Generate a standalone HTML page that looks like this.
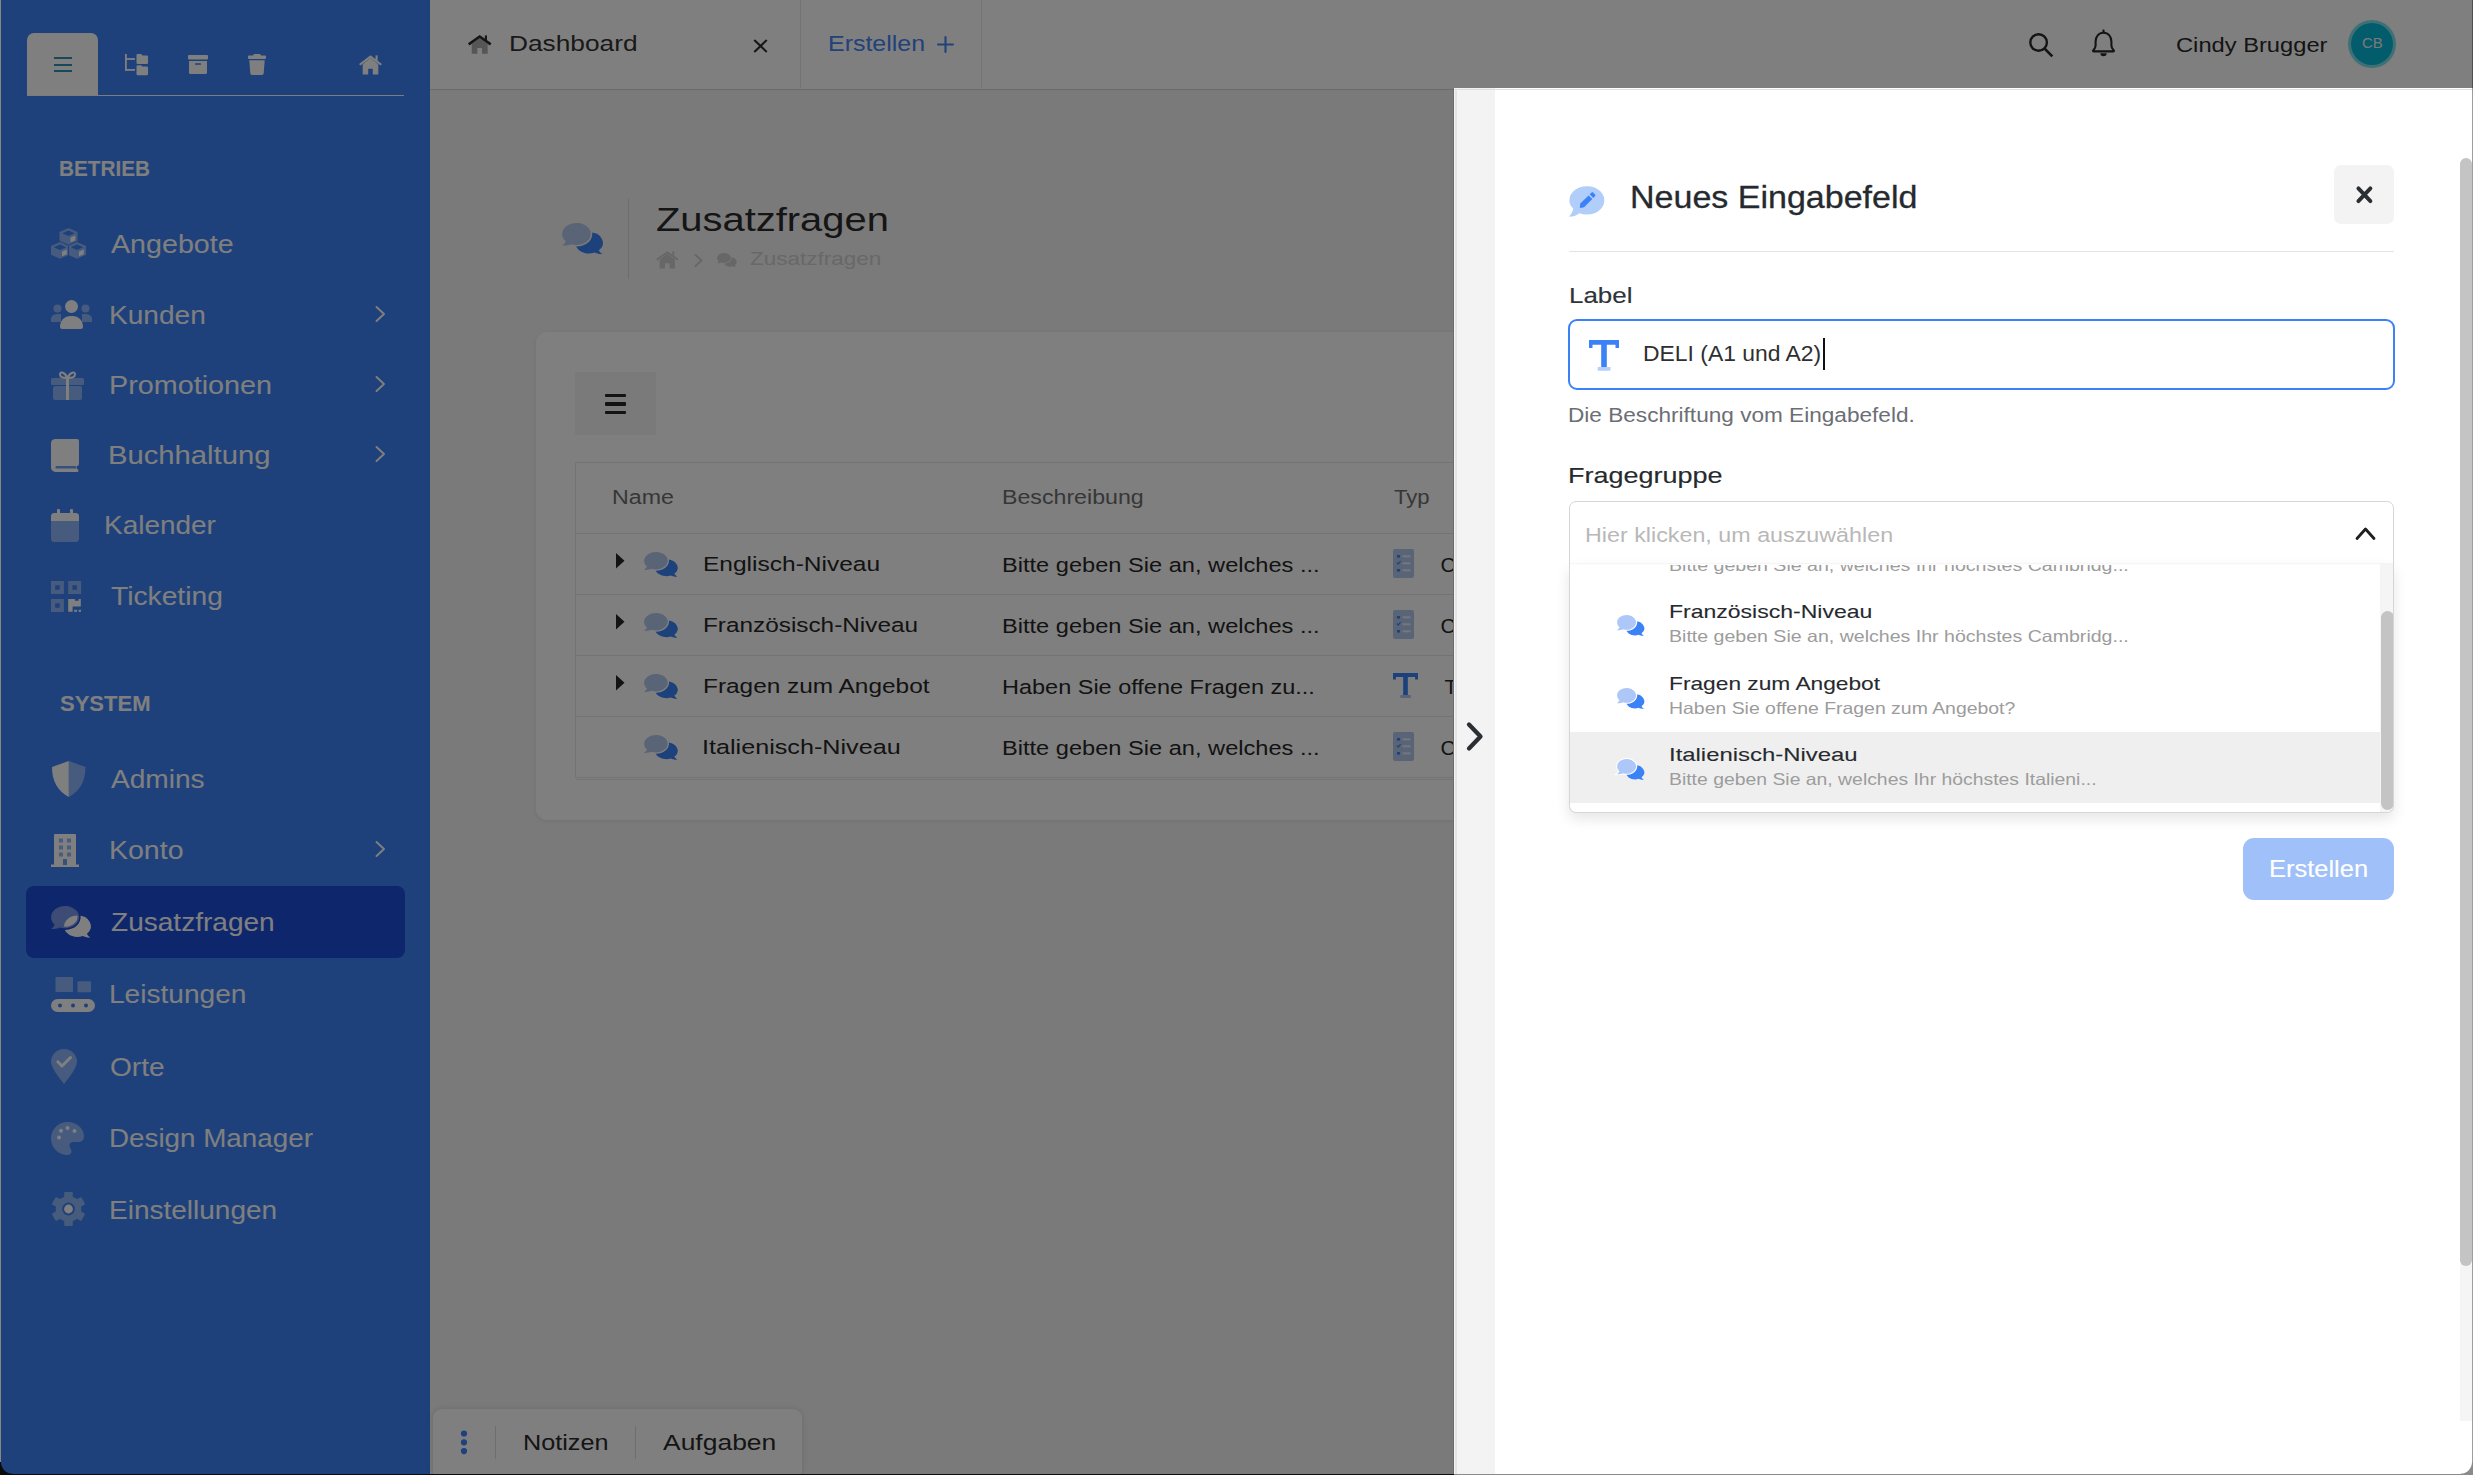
<!DOCTYPE html>
<html><head><meta charset="utf-8"><title>Zusatzfragen</title>
<style>
html,body{margin:0;padding:0;width:2473px;height:1475px;overflow:hidden;background:#7a7a7a}
body{position:relative;font-family:"Liberation Sans", sans-serif}
.t{position:absolute;white-space:nowrap}
.r{position:absolute}
</style></head><body>
<div class="r" style="left:0px;top:0px;width:2473px;height:1475px;background:#f4f4f4;"></div>
<div class="r" style="left:430px;top:0px;width:2043px;height:89px;background:#ffffff;"></div>
<div class="r" style="left:430px;top:89px;width:2043px;height:1px;background:#d6d6d6;"></div>
<div class="r" style="left:0px;top:0px;width:430px;height:1475px;background:#3c83f6;"></div>
<div class="r" style="left:27px;top:33px;width:71px;height:62px;background:#fff;border-radius:7px 7px 0 0"></div>
<div class="r" style="left:27px;top:95px;width:377px;height:1px;background:rgba(255,255,255,0.95);"></div>
<div class="r" style="left:54px;top:57px;width:18px;height:2px;background:#2d93b3;"></div>
<div class="r" style="left:54px;top:63.5px;width:18px;height:2.0px;background:#2d93b3;"></div>
<div class="r" style="left:54px;top:70px;width:18px;height:2px;background:#2d93b3;"></div>
<svg class="r" style="left:125px;top:54px;width:23px;height:21px;overflow:visible;" viewBox="0 0 23 21"><g fill="#ffffff"><rect x="0" y="0" width="1.8" height="16.8"/><rect x="0" y="4.1" width="10" height="1.8"/><rect x="0" y="15" width="10" height="1.8"/><path d="M11.5 1.2 a1.2 1.2 0 0 1 1.2-1.2 h3.3 l1.6 1.4 h4.2 a1.2 1.2 0 0 1 1.2 1.2 v6.2 a1.2 1.2 0 0 1-1.2 1.2 h-9.1 a1.2 1.2 0 0 1-1.2-1.2z"/><path d="M11.5 12.4 a1.2 1.2 0 0 1 1.2-1.2 h3.3 l1.6 1.4 h4.2 a1.2 1.2 0 0 1 1.2 1.2 v6.2 a1.2 1.2 0 0 1-1.2 1.2 h-9.1 a1.2 1.2 0 0 1-1.2-1.2z"/></g></svg>
<svg class="r" style="left:188px;top:55px;width:20px;height:19px;overflow:visible;" viewBox="0 0 20 19"><g fill="#ffffff"><rect x="0" y="0" width="20" height="4.6" rx="1"/><path d="M1 6 h18 v11.5 a1.5 1.5 0 0 1-1.5 1.5 h-15 a1.5 1.5 0 0 1-1.5-1.5z"/></g><rect x="7" y="8.2" width="6" height="1.6" rx="0.6" fill="#3c83f6"/></svg>
<svg class="r" style="left:248px;top:54px;width:18px;height:21px;overflow:visible;" viewBox="0 0 18 21"><g fill="#ffffff"><path d="M5 1.5 l1-1.5 h6 l1 1.5 h4 a1 1 0 0 1 1 1 v1.6 a1 1 0 0 1-1 1 h-16 a1 1 0 0 1-1-1 v-1.6 a1 1 0 0 1 1-1z"/><path d="M1.3 6.3 h15.4 l-1 13 a1.8 1.8 0 0 1-1.8 1.7 h-9.8 a1.8 1.8 0 0 1-1.8-1.7z"/></g></svg>
<svg class="r" style="left:359px;top:54.5px;width:23px;height:19.5px;overflow:visible;" viewBox="0 0 23 19.5"><path d="M3.68 9.36 L11.50 3.12 L19.32 9.36 V19.50 H13.80 V13.65 H9.20 V19.50 H3.68z" fill="#ffffff"/><path d="M0.69 9.75 L11.50 1.56 L22.31 9.75" fill="none" stroke="#ffffff" stroke-width="2.15" stroke-linejoin="miter"/><rect x="16.56" y="0.39" width="2.07" height="5.85" fill="#ffffff"/></svg>
<div class="t" style="left:59.08px;top:157.75px;font-size:22.5px;line-height:22.5px;color:#ffffff;font-weight:700;transform:scaleX(0.9210);transform-origin:0 0;">BETRIEB</div>
<div class="t" style="left:59.70px;top:693.05px;font-size:22.5px;line-height:22.5px;color:#ffffff;font-weight:700;transform:scaleX(0.9785);transform-origin:0 0;">SYSTEM</div>
<div class="r" style="left:26px;top:886px;width:379px;height:72px;background:#1d4ed8;border-radius:8px"></div>
<div class="t" style="left:111.20px;top:232.04px;font-size:25px;line-height:25px;color:#ffffff;font-weight:400;transform:scaleX(1.1457);transform-origin:0 0;">Angebote</div>
<div class="t" style="left:108.95px;top:303.24px;font-size:25px;line-height:25px;color:#ffffff;font-weight:400;transform:scaleX(1.1226);transform-origin:0 0;">Kunden</div>
<svg class="r" style="left:375px;top:306.29999999999995px;width:11px;height:16px;overflow:visible;" viewBox="0 0 11 16"><path d="M1.5 1 L9 8 L1.5 15" fill="none" stroke="#ffffff" stroke-width="1.9" stroke-linecap="round" stroke-linejoin="round"/></svg>
<div class="t" style="left:108.50px;top:373.34px;font-size:25px;line-height:25px;color:#ffffff;font-weight:400;transform:scaleX(1.1502);transform-origin:0 0;">Promotionen</div>
<svg class="r" style="left:375px;top:376.4px;width:11px;height:16px;overflow:visible;" viewBox="0 0 11 16"><path d="M1.5 1 L9 8 L1.5 15" fill="none" stroke="#ffffff" stroke-width="1.9" stroke-linecap="round" stroke-linejoin="round"/></svg>
<div class="t" style="left:108.46px;top:442.84px;font-size:25px;line-height:25px;color:#ffffff;font-weight:400;transform:scaleX(1.1690);transform-origin:0 0;">Buchhaltung</div>
<svg class="r" style="left:375px;top:445.9px;width:11px;height:16px;overflow:visible;" viewBox="0 0 11 16"><path d="M1.5 1 L9 8 L1.5 15" fill="none" stroke="#ffffff" stroke-width="1.9" stroke-linecap="round" stroke-linejoin="round"/></svg>
<div class="t" style="left:104.46px;top:513.14px;font-size:25px;line-height:25px;color:#ffffff;font-weight:400;transform:scaleX(1.1182);transform-origin:0 0;">Kalender</div>
<div class="t" style="left:110.80px;top:584.34px;font-size:25px;line-height:25px;color:#ffffff;font-weight:400;transform:scaleX(1.1283);transform-origin:0 0;">Ticketing</div>
<div class="t" style="left:110.90px;top:766.64px;font-size:25px;line-height:25px;color:#ffffff;font-weight:400;transform:scaleX(1.1236);transform-origin:0 0;">Admins</div>
<div class="t" style="left:108.62px;top:837.84px;font-size:25px;line-height:25px;color:#ffffff;font-weight:400;transform:scaleX(1.1405);transform-origin:0 0;">Konto</div>
<svg class="r" style="left:375px;top:840.9px;width:11px;height:16px;overflow:visible;" viewBox="0 0 11 16"><path d="M1.5 1 L9 8 L1.5 15" fill="none" stroke="#ffffff" stroke-width="1.9" stroke-linecap="round" stroke-linejoin="round"/></svg>
<div class="t" style="left:110.90px;top:909.94px;font-size:25px;line-height:25px;color:#ffffff;font-weight:400;transform:scaleX(1.1220);transform-origin:0 0;">Zusatzfragen</div>
<div class="t" style="left:108.65px;top:981.54px;font-size:25px;line-height:25px;color:#ffffff;font-weight:400;transform:scaleX(1.1237);transform-origin:0 0;">Leistungen</div>
<div class="t" style="left:109.78px;top:1054.74px;font-size:25px;line-height:25px;color:#ffffff;font-weight:400;transform:scaleX(1.1238);transform-origin:0 0;">Orte</div>
<div class="t" style="left:108.68px;top:1125.54px;font-size:25px;line-height:25px;color:#ffffff;font-weight:400;transform:scaleX(1.1115);transform-origin:0 0;">Design Manager</div>
<div class="t" style="left:108.66px;top:1197.54px;font-size:25px;line-height:25px;color:#ffffff;font-weight:400;transform:scaleX(1.1202);transform-origin:0 0;">Einstellungen</div>
<svg class="r" style="left:51px;top:228px;width:35px;height:31px;overflow:visible;" viewBox="0 0 35 31"><g opacity="0.42"><path d="M17.5 0 L26.5 3.9 V12.7 L17.5 16.8 L8.5 12.7 V3.9z M17.5 2.6 L23.7 5.3 L17.5 8 L11.3 5.3z" fill="#fff" fill-rule="evenodd"/></g><g opacity="0.42"><path d="M9 14 L18 17.9 V26.7 L9 30.8 L0 26.7 V17.9z M9 16.6 L15.2 19.3 L9 22 L2.8 19.3z M26 14 L35 17.9 V26.7 L26 30.8 L17 26.7 V17.9z M26 16.6 L32.2 19.3 L26 22 L19.8 19.3z" fill="#fff" fill-rule="evenodd"/></g><path d="M19.5 9.6 L24.3 7.6 V12.2 L19.5 14.2z" fill="#ffffff"/><path d="M11 23.6 L15.8 21.6 V26.2 L11 28.2z" fill="#ffffff"/><path d="M28 23.6 L32.8 21.6 V26.2 L28 28.2z" fill="#ffffff"/></svg>
<svg class="r" style="left:51px;top:300px;width:41px;height:29px;overflow:visible;" viewBox="0 0 41 29"><circle cx="6.5" cy="8.5" r="4" fill="rgba(255,255,255,0.42)"/><circle cx="34.5" cy="8.5" r="4" fill="rgba(255,255,255,0.42)"/><path d="M0 20 a6 5 0 0 1 6-6 h4 v8 h-10z" fill="rgba(255,255,255,0.42)"/><path d="M41 20 a6 5 0 0 0-6-6 h-4 v8 h10z" fill="rgba(255,255,255,0.42)"/><circle cx="20.5" cy="6.5" r="6.5" fill="#ffffff"/><path d="M9 26 a10 10 0 0 1 10-10 h3 a10 10 0 0 1 10 10 v0.5 a2.5 2.5 0 0 1-2.5 2.5 h-18 a2.5 2.5 0 0 1-2.5-2.5z" fill="#ffffff"/></svg>
<svg class="r" style="left:51px;top:371px;width:33px;height:29px;overflow:visible;" viewBox="0 0 33 29"><rect x="0" y="7" width="33" height="7" rx="1.5" fill="rgba(255,255,255,0.42)"/><rect x="2" y="15" width="29" height="14" rx="2" fill="rgba(255,255,255,0.42)"/><rect x="15" y="7" width="3" height="22" fill="#ffffff"/><path d="M16.5 7 C14 1 9 0 9 3.5 C9 6 12 7 16.5 7 C21 7 24 6 24 3.5 C24 0 19 1 16.5 7" fill="none" stroke="#ffffff" stroke-width="2"/></svg>
<svg class="r" style="left:51px;top:439px;width:28px;height:33px;overflow:visible;" viewBox="0 0 28 33"><path d="M4 0 h22 a2 2 0 0 1 2 2 v23 a2 2 0 0 1-2 2 v3 a1.5 1.5 0 0 1 0 3 h-21 a4.5 4.5 0 0 1-5-4.5 v-24 a4.5 4.5 0 0 1 4-4.5z" fill="#ffffff"/><rect x="4.5" y="27" width="21" height="2.6" rx="1.2" fill="#3c83f6" opacity="0.75"/></svg>
<svg class="r" style="left:51px;top:509px;width:28px;height:33px;overflow:visible;" viewBox="0 0 28 33"><rect x="0" y="4" width="28" height="29" rx="3.5" fill="rgba(255,255,255,0.42)"/><path d="M3.5 4 h21 a3.5 3.5 0 0 1 3.5 3.5 v4.5 h-28 v-4.5 a3.5 3.5 0 0 1 3.5-3.5z" fill="#ffffff"/><rect x="6" y="0" width="3" height="8" rx="1" fill="#ffffff"/><rect x="19" y="0" width="3" height="8" rx="1" fill="#ffffff"/></svg>
<svg class="r" style="left:51px;top:581px;width:30px;height:31px;overflow:visible;" viewBox="0 0 30 31"><g fill="#fff" opacity="0.42"><path d="M0 0h12.9v12.9H0z M4.2 4.2v4.5h4.5V4.2z M17.2 0h12.9v12.9H17.2z M21.4 4.2v4.5h4.5V4.2z M0 18.1h12.9V31H0z M4.2 22.3v4.5h4.5v-4.5z" fill-rule="evenodd"/></g><path d="M17.2 18.1 H23.9 V19.8 H27.6 V18.1 H29.8 V25.6 H21.6 V30.8 H17.2z" fill="#ffffff"/><rect x="23.2" y="28.8" width="2.8" height="2" fill="#ffffff"/><rect x="27.6" y="28.8" width="2.4" height="2" fill="#ffffff"/></svg>
<svg class="r" style="left:51.5px;top:761px;width:33.5px;height:36px;overflow:visible;" viewBox="0 0 33.5 36"><path d="M16.75 0 L33.5 6 C33.5 20 28 30 16.75 36z" fill="rgba(255,255,255,0.42)"/><path d="M16.75 0 L0 6 C0 20 5.5 30 16.75 36z" fill="#ffffff"/></svg>
<svg class="r" style="left:51px;top:834px;width:28px;height:33px;overflow:visible;" viewBox="0 0 28 33"><rect x="3" y="0" width="22" height="31" rx="1" fill="#ffffff"/><rect x="0" y="30.5" width="28" height="2.5" fill="#ffffff"/><g fill="#3c83f6" opacity="0.55"><rect x="8" y="4.5" width="4" height="4"/><rect x="16" y="4.5" width="4" height="4"/><rect x="8" y="11.5" width="4" height="4"/><rect x="16" y="11.5" width="4" height="4"/><rect x="8" y="18.5" width="4" height="4"/><rect x="16" y="18.5" width="4" height="4"/></g><rect x="12" y="25" width="4" height="6" fill="#3c83f6" opacity="0.75"/></svg>
<svg class="r" style="left:51px;top:905.5px;width:39.5px;height:31.5px;overflow:visible;" viewBox="0 0 39.5 31.5"><g transform="scale(1.1826,1.2805)"><path d="M22.3 7.4 A11.1 8.3 0 0 1 30.4 21.6 C31 22.9 32.1 23.9 33.4 24.6 C30.8 24.8 28.4 24.1 26.8 23.4 C25.4 23.9 23.9 24.2 22.3 24.2 A11.1 8.3 0 0 1 22.3 7.4z" fill="#ffffff"/><path d="M0.1 8.7 A11.8 8.7 0 1 1 7.6 16.8 C5.6 17.7 2.8 18.1 0 17.9 C1.3 17.1 2.4 16 3.1 14.6 C1.2 13 0.1 11 0.1 8.7z" fill="none" stroke="#1d4ed8" stroke-width="2.6"/><path d="M0.1 8.7 A11.8 8.7 0 1 1 7.6 16.8 C5.6 17.7 2.8 18.1 0 17.9 C1.3 17.1 2.4 16 3.1 14.6 C1.2 13 0.1 11 0.1 8.7z" fill="rgba(255,255,255,0.42)"/></g></svg>
<svg class="r" style="left:51px;top:977px;width:44px;height:35px;overflow:visible;" viewBox="0 0 44 35"><rect x="4.5" y="0" width="17.5" height="15" rx="1" fill="rgba(255,255,255,0.42)"/><rect x="26.5" y="4.3" width="13.5" height="11" rx="1" fill="rgba(255,255,255,0.42)"/><rect x="0" y="22" width="44" height="13" rx="6.5" fill="#ffffff"/><circle cx="9" cy="28.5" r="2" fill="#3c83f6"/><circle cx="22" cy="28.5" r="2" fill="#3c83f6"/><circle cx="35" cy="28.5" r="2" fill="#3c83f6"/></svg>
<svg class="r" style="left:51px;top:1049px;width:26px;height:35px;overflow:visible;" viewBox="0 0 26 35"><path d="M13 0 C20.2 0 26 5.6 26 12.6 C26 19 17.5 29.5 13 35 C8.5 29.5 0 19 0 12.6 C0 5.6 5.8 0 13 0z" fill="rgba(255,255,255,0.42)"/><path d="M6.8 12.8 L11 17 L19.5 8.5" fill="none" stroke="#ffffff" stroke-width="3" stroke-linecap="round" stroke-linejoin="round"/></svg>
<svg class="r" style="left:51px;top:1122px;width:33px;height:33px;overflow:visible;" viewBox="0 0 33 33"><path d="M16.5 0 C26 0 33 6.5 33 14.5 C33 19 29.5 20 26.5 20 H22 a3.5 3.5 0 0 0-3 5.5 C19.8 26.8 20.5 28 20.5 29.5 C20.5 31.8 18.8 33 16.5 33 C7.4 33 0 25.6 0 16.5 C0 7.4 7.4 0 16.5 0z" fill="rgba(255,255,255,0.42)"/><g fill="#ffffff"><circle cx="8" cy="15.5" r="2"/><circle cx="10" cy="8.8" r="2"/><circle cx="16.5" cy="6" r="2"/><circle cx="23.5" cy="9" r="2"/></g></svg>
<svg class="r" style="left:52px;top:1192px;width:33px;height:34px;overflow:visible;" viewBox="0 0 33 34"><g fill="#fff" opacity="0.42"><rect x="12.25" y="0" width="8.5" height="8" rx="1.2" transform="rotate(0 16.5 17)"/><rect x="12.25" y="0" width="8.5" height="8" rx="1.2" transform="rotate(60 16.5 17)"/><rect x="12.25" y="0" width="8.5" height="8" rx="1.2" transform="rotate(120 16.5 17)"/><rect x="12.25" y="0" width="8.5" height="8" rx="1.2" transform="rotate(180 16.5 17)"/><rect x="12.25" y="0" width="8.5" height="8" rx="1.2" transform="rotate(240 16.5 17)"/><rect x="12.25" y="0" width="8.5" height="8" rx="1.2" transform="rotate(300 16.5 17)"/><circle cx="16.5" cy="17" r="12.8"/></g><circle cx="16.5" cy="17" r="6.4" fill="#3c83f6"/><circle cx="16.5" cy="17" r="4.4" fill="#ffffff"/></svg>
<svg class="r" style="left:467.6px;top:35px;width:23.4px;height:18.7px;overflow:visible;" viewBox="0 0 23.4 18.7"><path d="M3.74 8.98 L11.70 2.99 L19.66 8.98 V18.70 H14.04 V13.09 H9.36 V18.70 H3.74z" fill="#aaacac"/><path d="M0.70 9.35 L11.70 1.50 L22.70 9.35" fill="none" stroke="#2a2a2a" stroke-width="2.62" stroke-linejoin="miter"/><rect x="16.85" y="0.37" width="2.11" height="5.61" fill="#2a2a2a"/></svg>
<div class="t" style="left:509.03px;top:32.95px;font-size:22.5px;line-height:22.5px;color:#333;font-weight:400;transform:scaleX(1.1680);transform-origin:0 0;">Dashboard</div>
<svg class="r" style="left:753px;top:38.5px;width:15px;height:14px;overflow:visible;" viewBox="0 0 15 14"><path d="M1.8 1.6 L13.2 12.4 M13.2 1.6 L1.8 12.4" stroke="#2e2e2e" stroke-width="2.1" stroke-linecap="round"/></svg>
<div class="r" style="left:800px;top:0px;width:1px;height:88px;background:#e6e6e6;"></div>
<div class="t" style="left:827.69px;top:32.95px;font-size:22.5px;line-height:22.5px;color:#4584f5;font-weight:400;transform:scaleX(1.1090);transform-origin:0 0;">Erstellen</div>
<svg class="r" style="left:937px;top:35.5px;width:17px;height:17px;overflow:visible;" viewBox="0 0 17 17"><path d="M8.5 1 V16 M1 8.5 H16" stroke="#4584f5" stroke-width="2.1" stroke-linecap="round"/></svg>
<div class="r" style="left:981px;top:0px;width:1px;height:88px;background:#e6e6e6;"></div>
<svg class="r" style="left:2028px;top:32px;width:26px;height:26px;overflow:visible;" viewBox="0 0 26 26"><circle cx="10.6" cy="10.5" r="8.3" fill="none" stroke="#282828" stroke-width="2.4"/><path d="M17 17 L23.4 23.4" stroke="#282828" stroke-width="2.6" stroke-linecap="square"/></svg>
<svg class="r" style="left:2092px;top:28.8px;width:23px;height:28px;overflow:visible;" viewBox="0 0 23 28"><path d="M11.5 3.8 C6.5 3.8 3.6 7.8 3.6 12.5 V16.5 C3.6 18.3 2.8 19.6 1.4 21.2 C0.6 22.1 1.1 22.4 2 22.4 H21 C21.9 22.4 22.4 22.1 21.6 21.2 C20.2 19.6 19.4 18.3 19.4 16.5 V12.5 C19.4 7.8 16.5 3.8 11.5 3.8z" fill="none" stroke="#282828" stroke-width="2.1"/><rect x="10.4" y="0.6" width="2.2" height="3.5" rx="1" fill="#282828"/><path d="M8.3 24.3 H14.7 A3.2 3 0 0 1 8.3 24.3z" fill="#282828"/></svg>
<div class="t" style="left:2176.24px;top:34.75px;font-size:20.5px;line-height:20.5px;color:#282828;font-weight:400;transform:scaleX(1.1558);transform-origin:0 0;">Cindy Brugger</div>
<div class="r" style="left:2348px;top:20px;width:48px;height:48px;border-radius:50%;background:#7fe0ec"></div>
<div class="r" style="left:2351px;top:23px;width:42px;height:42px;border-radius:50%;background:#06b8d6"></div>
<div class="t" style="left:2362.00px;top:36.27px;font-size:14.8px;line-height:14.8px;color:#f2f2f2;font-weight:400;transform:scaleX(1.0104);transform-origin:0 0;">CB</div>
<svg class="r" style="left:562px;top:223px;width:40.5px;height:31px;overflow:visible;" viewBox="0 0 40.5 31"><g transform="scale(1.2126,1.2602)"><path d="M22.3 7.4 A11.1 8.3 0 0 1 30.4 21.6 C31 22.9 32.1 23.9 33.4 24.6 C30.8 24.8 28.4 24.1 26.8 23.4 C25.4 23.9 23.9 24.2 22.3 24.2 A11.1 8.3 0 0 1 22.3 7.4z" fill="#3b82f6"/><path d="M0.1 8.7 A11.8 8.7 0 1 1 7.6 16.8 C5.6 17.7 2.8 18.1 0 17.9 C1.3 17.1 2.4 16 3.1 14.6 C1.2 13 0.1 11 0.1 8.7z" fill="none" stroke="#f4f4f4" stroke-width="2.6"/><path d="M0.1 8.7 A11.8 8.7 0 1 1 7.6 16.8 C5.6 17.7 2.8 18.1 0 17.9 C1.3 17.1 2.4 16 3.1 14.6 C1.2 13 0.1 11 0.1 8.7z" fill="#b4c9ee"/></g></svg>
<div class="r" style="left:628px;top:198px;width:1px;height:81px;background:#dcdcdc;"></div>
<div class="t" style="left:655.99px;top:202.87px;font-size:33px;line-height:33px;color:#2b2b2b;font-weight:400;transform:scaleX(1.2089);transform-origin:0 0;">Zusatzfragen</div>
<svg class="r" style="left:656px;top:251px;width:22.6px;height:17.5px;overflow:visible;" viewBox="0 0 22.6 17.5"><path d="M3.62 8.40 L11.30 2.80 L18.98 8.40 V17.50 H13.56 V12.25 H9.04 V17.50 H3.62z" fill="#cfcfcf"/><path d="M0.68 8.75 L11.30 1.40 L21.92 8.75" fill="none" stroke="#cfcfcf" stroke-width="1.93" stroke-linejoin="miter"/><rect x="16.27" y="0.35" width="2.03" height="5.25" fill="#cfcfcf"/></svg>
<svg class="r" style="left:694px;top:253.5px;width:9px;height:13px;overflow:visible;" viewBox="0 0 9 13"><path d="M1.5 1 L7.5 6.5 L1.5 12" fill="none" stroke="#cfcfcf" stroke-width="2" stroke-linecap="round" stroke-linejoin="round"/></svg>
<svg class="r" style="left:717px;top:253px;width:19.5px;height:14px;overflow:visible;" viewBox="0 0 19.5 14"><g transform="scale(0.5838,0.5691)"><path d="M22.3 7.4 A11.1 8.3 0 0 1 30.4 21.6 C31 22.9 32.1 23.9 33.4 24.6 C30.8 24.8 28.4 24.1 26.8 23.4 C25.4 23.9 23.9 24.2 22.3 24.2 A11.1 8.3 0 0 1 22.3 7.4z" fill="#cfcfcf"/><path d="M0.1 8.7 A11.8 8.7 0 1 1 7.6 16.8 C5.6 17.7 2.8 18.1 0 17.9 C1.3 17.1 2.4 16 3.1 14.6 C1.2 13 0.1 11 0.1 8.7z" fill="none" stroke="#f4f4f4" stroke-width="2.6"/><path d="M0.1 8.7 A11.8 8.7 0 1 1 7.6 16.8 C5.6 17.7 2.8 18.1 0 17.9 C1.3 17.1 2.4 16 3.1 14.6 C1.2 13 0.1 11 0.1 8.7z" fill="#cfcfcf"/></g></svg>
<div class="t" style="left:749.60px;top:250.14px;font-size:18.5px;line-height:18.5px;color:#d0d0d0;font-weight:400;transform:scaleX(1.2147);transform-origin:0 0;">Zusatzfragen</div>
<div class="r" style="left:536px;top:332px;width:1100px;height:488px;background:#fff;border-radius:11px;box-shadow:0 1px 4px rgba(0,0,0,0.08)"></div>
<div class="r" style="left:575px;top:372px;width:81px;height:63px;background:#f4f4f4;"></div>
<div class="r" style="left:605px;top:393.6px;width:21px;height:3.1999999999999886px;background:#262626;border-radius:1px"></div>
<div class="r" style="left:605px;top:402.4px;width:21px;height:3.1999999999999886px;background:#262626;border-radius:1px"></div>
<div class="r" style="left:605px;top:411.2px;width:21px;height:3.1999999999999886px;background:#262626;border-radius:1px"></div>
<div class="r" style="left:575px;top:462px;width:1000px;height:316px;border:1px solid #e6e6e6;box-sizing:border-box"></div>
<div class="r" style="left:576px;top:533px;width:999px;height:1px;background:#e6e6e6;"></div>
<div class="r" style="left:576px;top:594px;width:999px;height:1px;background:#e6e6e6;"></div>
<div class="r" style="left:576px;top:655px;width:999px;height:1px;background:#e6e6e6;"></div>
<div class="r" style="left:576px;top:716px;width:999px;height:1px;background:#e6e6e6;"></div>
<div class="r" style="left:576px;top:779px;width:999px;height:1px;background:#e6e6e6;"></div>
<div class="t" style="left:611.61px;top:488.39px;font-size:19.5px;line-height:19.5px;color:#6e6e6e;font-weight:400;transform:scaleX(1.1899);transform-origin:0 0;">Name</div>
<div class="t" style="left:1001.81px;top:488.29px;font-size:19.5px;line-height:19.5px;color:#6e6e6e;font-weight:400;transform:scaleX(1.1882);transform-origin:0 0;">Beschreibung</div>
<div class="t" style="left:1393.50px;top:488.29px;font-size:19.5px;line-height:19.5px;color:#6e6e6e;font-weight:400;transform:scaleX(1.1334);transform-origin:0 0;">Typ</div>
<svg class="r" style="left:615.5px;top:552.8px;width:8.5px;height:15.5px;overflow:visible;" viewBox="0 0 8.5 15.5"><path d="M0 0 L8.5 7.75 L0 15.5z" fill="#262626"/></svg>
<svg class="r" style="left:643.8px;top:551.6px;width:33.4px;height:24.6px;overflow:visible;" viewBox="0 0 33.4 24.6"><g transform="scale(1.0000,1.0000)"><path d="M22.3 7.4 A11.1 8.3 0 0 1 30.4 21.6 C31 22.9 32.1 23.9 33.4 24.6 C30.8 24.8 28.4 24.1 26.8 23.4 C25.4 23.9 23.9 24.2 22.3 24.2 A11.1 8.3 0 0 1 22.3 7.4z" fill="#3b82f6"/><path d="M0.1 8.7 A11.8 8.7 0 1 1 7.6 16.8 C5.6 17.7 2.8 18.1 0 17.9 C1.3 17.1 2.4 16 3.1 14.6 C1.2 13 0.1 11 0.1 8.7z" fill="none" stroke="#fff" stroke-width="2.6"/><path d="M0.1 8.7 A11.8 8.7 0 1 1 7.6 16.8 C5.6 17.7 2.8 18.1 0 17.9 C1.3 17.1 2.4 16 3.1 14.6 C1.2 13 0.1 11 0.1 8.7z" fill="#b4c9ee"/></g></svg>
<div class="t" style="left:702.50px;top:554.45px;font-size:20.5px;line-height:20.5px;color:#262626;font-weight:400;transform:scaleX(1.1954);transform-origin:0 0;">Englisch-Niveau</div>
<div class="t" style="left:1001.85px;top:554.65px;font-size:20.5px;line-height:20.5px;color:#262626;font-weight:400;transform:scaleX(1.1517);transform-origin:0 0;">Bitte geben Sie an, welches ...</div>
<svg class="r" style="left:1393px;top:549px;width:21px;height:29px;overflow:visible;" viewBox="0 0 21 29"><rect x="0" y="0" width="21" height="29" rx="2" fill="#b4c9ee"/><g fill="#3b82f6"><rect x="4" y="6" width="3" height="2.6"/><rect x="9.5" y="6.3" width="8" height="2" fill="#e8efff"/><path d="M4 13.5 L5.3 15 L7.6 12" fill="none" stroke="#3b82f6" stroke-width="1.2"/><rect x="9.5" y="13.3" width="8" height="2" fill="#e8efff"/><rect x="4" y="20" width="3" height="2.6"/><rect x="9.5" y="20.3" width="8" height="2" fill="#e8efff"/></g></svg>
<div class="t" style="left:1440.5px;top:554.22px;font-size:21px;line-height:21px;color:#262626;font-weight:400;letter-spacing:0.0px;">C</div>
<svg class="r" style="left:615.5px;top:613.8px;width:8.5px;height:15.5px;overflow:visible;" viewBox="0 0 8.5 15.5"><path d="M0 0 L8.5 7.75 L0 15.5z" fill="#262626"/></svg>
<svg class="r" style="left:643.8px;top:612.6px;width:33.4px;height:24.6px;overflow:visible;" viewBox="0 0 33.4 24.6"><g transform="scale(1.0000,1.0000)"><path d="M22.3 7.4 A11.1 8.3 0 0 1 30.4 21.6 C31 22.9 32.1 23.9 33.4 24.6 C30.8 24.8 28.4 24.1 26.8 23.4 C25.4 23.9 23.9 24.2 22.3 24.2 A11.1 8.3 0 0 1 22.3 7.4z" fill="#3b82f6"/><path d="M0.1 8.7 A11.8 8.7 0 1 1 7.6 16.8 C5.6 17.7 2.8 18.1 0 17.9 C1.3 17.1 2.4 16 3.1 14.6 C1.2 13 0.1 11 0.1 8.7z" fill="none" stroke="#fff" stroke-width="2.6"/><path d="M0.1 8.7 A11.8 8.7 0 1 1 7.6 16.8 C5.6 17.7 2.8 18.1 0 17.9 C1.3 17.1 2.4 16 3.1 14.6 C1.2 13 0.1 11 0.1 8.7z" fill="#b4c9ee"/></g></svg>
<div class="t" style="left:702.51px;top:615.45px;font-size:20.5px;line-height:20.5px;color:#262626;font-weight:400;transform:scaleX(1.1867);transform-origin:0 0;">Französisch-Niveau</div>
<div class="t" style="left:1001.85px;top:615.65px;font-size:20.5px;line-height:20.5px;color:#262626;font-weight:400;transform:scaleX(1.1517);transform-origin:0 0;">Bitte geben Sie an, welches ...</div>
<svg class="r" style="left:1393px;top:610px;width:21px;height:29px;overflow:visible;" viewBox="0 0 21 29"><rect x="0" y="0" width="21" height="29" rx="2" fill="#b4c9ee"/><g fill="#3b82f6"><rect x="4" y="6" width="3" height="2.6"/><rect x="9.5" y="6.3" width="8" height="2" fill="#e8efff"/><path d="M4 13.5 L5.3 15 L7.6 12" fill="none" stroke="#3b82f6" stroke-width="1.2"/><rect x="9.5" y="13.3" width="8" height="2" fill="#e8efff"/><rect x="4" y="20" width="3" height="2.6"/><rect x="9.5" y="20.3" width="8" height="2" fill="#e8efff"/></g></svg>
<div class="t" style="left:1440.5px;top:615.22px;font-size:21px;line-height:21px;color:#262626;font-weight:400;letter-spacing:0.0px;">C</div>
<svg class="r" style="left:615.5px;top:674.8px;width:8.5px;height:15.5px;overflow:visible;" viewBox="0 0 8.5 15.5"><path d="M0 0 L8.5 7.75 L0 15.5z" fill="#262626"/></svg>
<svg class="r" style="left:643.8px;top:673.6px;width:33.4px;height:24.6px;overflow:visible;" viewBox="0 0 33.4 24.6"><g transform="scale(1.0000,1.0000)"><path d="M22.3 7.4 A11.1 8.3 0 0 1 30.4 21.6 C31 22.9 32.1 23.9 33.4 24.6 C30.8 24.8 28.4 24.1 26.8 23.4 C25.4 23.9 23.9 24.2 22.3 24.2 A11.1 8.3 0 0 1 22.3 7.4z" fill="#3b82f6"/><path d="M0.1 8.7 A11.8 8.7 0 1 1 7.6 16.8 C5.6 17.7 2.8 18.1 0 17.9 C1.3 17.1 2.4 16 3.1 14.6 C1.2 13 0.1 11 0.1 8.7z" fill="none" stroke="#fff" stroke-width="2.6"/><path d="M0.1 8.7 A11.8 8.7 0 1 1 7.6 16.8 C5.6 17.7 2.8 18.1 0 17.9 C1.3 17.1 2.4 16 3.1 14.6 C1.2 13 0.1 11 0.1 8.7z" fill="#b4c9ee"/></g></svg>
<div class="t" style="left:702.51px;top:676.45px;font-size:20.5px;line-height:20.5px;color:#262626;font-weight:400;transform:scaleX(1.1900);transform-origin:0 0;">Fragen zum Angebot</div>
<div class="t" style="left:1001.85px;top:676.65px;font-size:20.5px;line-height:20.5px;color:#262626;font-weight:400;transform:scaleX(1.1455);transform-origin:0 0;">Haben Sie offene Fragen zu...</div>
<svg class="r" style="left:1393px;top:672.8px;width:25px;height:25px;overflow:visible;" viewBox="0 0 25 25"><g transform="scale(0.8333,0.8143)"><path d="M0 0 H30 V8 H26.5 V4.8 H17.8 V27 H12.2 V4.8 H3.5 V8 H0z" fill="#3b82f6"/><rect x="8.7" y="26.9" width="12.8" height="3.8" rx="0.6" fill="#b4c9ee"/></g></svg>
<div class="t" style="left:1444.5px;top:676.22px;font-size:21px;line-height:21px;color:#262626;font-weight:400;letter-spacing:0.0px;">T</div>
<svg class="r" style="left:643.8px;top:734.6px;width:33.4px;height:24.6px;overflow:visible;" viewBox="0 0 33.4 24.6"><g transform="scale(1.0000,1.0000)"><path d="M22.3 7.4 A11.1 8.3 0 0 1 30.4 21.6 C31 22.9 32.1 23.9 33.4 24.6 C30.8 24.8 28.4 24.1 26.8 23.4 C25.4 23.9 23.9 24.2 22.3 24.2 A11.1 8.3 0 0 1 22.3 7.4z" fill="#3b82f6"/><path d="M0.1 8.7 A11.8 8.7 0 1 1 7.6 16.8 C5.6 17.7 2.8 18.1 0 17.9 C1.3 17.1 2.4 16 3.1 14.6 C1.2 13 0.1 11 0.1 8.7z" fill="none" stroke="#fff" stroke-width="2.6"/><path d="M0.1 8.7 A11.8 8.7 0 1 1 7.6 16.8 C5.6 17.7 2.8 18.1 0 17.9 C1.3 17.1 2.4 16 3.1 14.6 C1.2 13 0.1 11 0.1 8.7z" fill="#b4c9ee"/></g></svg>
<div class="t" style="left:702.47px;top:737.45px;font-size:20.5px;line-height:20.5px;color:#262626;font-weight:400;transform:scaleX(1.2276);transform-origin:0 0;">Italienisch-Niveau</div>
<div class="t" style="left:1001.85px;top:737.65px;font-size:20.5px;line-height:20.5px;color:#262626;font-weight:400;transform:scaleX(1.1517);transform-origin:0 0;">Bitte geben Sie an, welches ...</div>
<svg class="r" style="left:1393px;top:732px;width:21px;height:29px;overflow:visible;" viewBox="0 0 21 29"><rect x="0" y="0" width="21" height="29" rx="2" fill="#b4c9ee"/><g fill="#3b82f6"><rect x="4" y="6" width="3" height="2.6"/><rect x="9.5" y="6.3" width="8" height="2" fill="#e8efff"/><path d="M4 13.5 L5.3 15 L7.6 12" fill="none" stroke="#3b82f6" stroke-width="1.2"/><rect x="9.5" y="13.3" width="8" height="2" fill="#e8efff"/><rect x="4" y="20" width="3" height="2.6"/><rect x="9.5" y="20.3" width="8" height="2" fill="#e8efff"/></g></svg>
<div class="t" style="left:1440.5px;top:737.22px;font-size:21px;line-height:21px;color:#262626;font-weight:400;letter-spacing:0.0px;">C</div>
<div class="r" style="left:433px;top:1409px;width:369px;height:70px;background:#fff;border-radius:9px;box-shadow:0 0 6px rgba(0,0,0,0.12)"></div>
<svg class="r" style="left:460px;top:1430px;width:8px;height:25px;overflow:visible;" viewBox="0 0 8 25"><g fill="#3b82f6"><circle cx="4" cy="3.5" r="3.1"/><circle cx="4" cy="12.3" r="3.1"/><circle cx="4" cy="21.1" r="3.1"/></g></svg>
<div class="r" style="left:495px;top:1426px;width:1px;height:33px;background:#dddddd;"></div>
<div class="t" style="left:522.65px;top:1432.08px;font-size:22px;line-height:22px;color:#2b2b2b;font-weight:400;transform:scaleX(1.1457);transform-origin:0 0;">Notizen</div>
<div class="r" style="left:635px;top:1426px;width:1px;height:33px;background:#dddddd;"></div>
<div class="t" style="left:663.00px;top:1432.08px;font-size:22px;line-height:22px;color:#2b2b2b;font-weight:400;transform:scaleX(1.2026);transform-origin:0 0;">Aufgaben</div>
<div class="r" style="left:0px;top:0px;width:2473px;height:1475px;background:rgba(0,0,0,0.5);"></div>
<div class="r" style="left:1453px;top:88px;width:1px;height:1387px;background:#6c6c6c;"></div>
<div class="r" style="left:1454px;top:88px;width:1019px;height:1387px;background:#fff"></div>
<div class="r" style="left:1454px;top:88px;width:41px;height:1387px;background:#f3f3f3;"></div>
<div class="r" style="left:1455px;top:89px;width:2px;height:1386px;background:#e4e4e4;"></div>
<div class="r" style="left:1454px;top:89px;width:1019px;height:1px;background:#e0e0e0;"></div>
<svg class="r" style="left:1466px;top:722px;width:18px;height:30px;overflow:visible;" viewBox="0 0 18 30"><path d="M3 2.5 L14.5 14.5 L3 26.5" fill="none" stroke="#2b2f34" stroke-width="4.3" stroke-linecap="round" stroke-linejoin="round"/></svg>
<svg class="r" style="left:1569px;top:186px;width:35.5px;height:31px;overflow:visible;" viewBox="0 0 35.5 31"><path d="M17.9 0.2 A17.5 14.2 0 1 1 10.3 27.2 C7.6 29.6 3.8 30.8 0 30.8 C2.2 28.4 3.9 25.3 4.3 22.6 C1.6 20.2 0.4 17.4 0.4 14.4 A17.5 14.2 0 0 1 17.9 0.2z" fill="#b1cdf9"/><path d="M10.8 21.9 L11.3 17.6 L19.6 9.4 L23.3 13.1 L15.1 21.3z" fill="#3b82f6"/><path d="M20.7 8.3 L22.6 6.4 a1 1 0 0 1 1.4 0 L26.1 8.5 a1 1 0 0 1 0 1.4 L24.3 11.9z" fill="#3b82f6"/></svg>
<div class="t" style="left:1629.97px;top:182.18px;font-size:30.5px;line-height:30.5px;color:#262a2e;font-weight:400;transform:scaleX(1.1151);transform-origin:0 0;-webkit-text-stroke:0.3px #262a2e;">Neues Eingabefeld</div>
<div class="r" style="left:2334.2px;top:165px;width:59.7px;height:59px;background:#f3f3f3;border-radius:7px"></div>
<svg class="r" style="left:2355.5px;top:186px;width:17px;height:17.5px;overflow:visible;" viewBox="0 0 17 17.5"><path d="M2.4 2.3 L14.4 15.1 M14.4 2.3 L2.4 15.1" stroke="#2b2f33" stroke-width="3.9" stroke-linecap="round"/></svg>
<div class="r" style="left:1569px;top:251px;width:825px;height:1px;background:#e4e4e4;"></div>
<div class="t" style="left:1568.52px;top:285.18px;font-size:22px;line-height:22px;color:#2f3337;font-weight:400;transform:scaleX(1.1783);transform-origin:0 0;-webkit-text-stroke:0.15px #2f3337;">Label</div>
<div class="r" style="left:1567.5px;top:318.5px;width:827.5px;height:71.5px;border:2.6px solid #3b82f6;border-radius:9px;box-sizing:border-box"></div>
<svg class="r" style="left:1589px;top:340px;width:30px;height:30.7px;overflow:visible;" viewBox="0 0 30 30.7"><g transform="scale(1.0000,1.0000)"><path d="M0 0 H30 V8 H26.5 V4.8 H17.8 V27 H12.2 V4.8 H3.5 V8 H0z" fill="#3b82f6"/><rect x="8.7" y="26.9" width="12.8" height="3.8" rx="0.6" fill="#b7cffa"/></g></svg>
<div class="t" style="left:1643.16px;top:343.28px;font-size:22px;line-height:22px;color:#2f2f2f;font-weight:400;transform:scaleX(1.0406);transform-origin:0 0;">DELI (A1 und A2)</div>
<div class="r" style="left:1823px;top:338px;width:2.2000000000000455px;height:32px;background:#111;"></div>
<div class="t" style="left:1568.34px;top:406.29px;font-size:19.5px;line-height:19.5px;color:#6b6e75;font-weight:400;transform:scaleX(1.1592);transform-origin:0 0;">Die Beschriftung vom Eingabefeld.</div>
<div class="t" style="left:1568.47px;top:465.18px;font-size:22px;line-height:22px;color:#262a2e;font-weight:400;transform:scaleX(1.2266);transform-origin:0 0;-webkit-text-stroke:0.15px #262a2e;">Fragegruppe</div>
<div class="r" style="left:1569px;top:500.5px;width:825px;height:120px;border:1px solid #d6d6d6;border-radius:7px;box-sizing:border-box;background:#fff"></div>
<div class="t" style="left:1584.76px;top:525.45px;font-size:20.5px;line-height:20.5px;color:#b8b8b8;font-weight:400;transform:scaleX(1.1361);transform-origin:0 0;">Hier klicken, um auszuwählen</div>
<svg class="r" style="left:2355px;top:526px;width:21px;height:15px;overflow:visible;" viewBox="0 0 21 15"><path d="M2 12.5 L10.5 3 L19 12.5" fill="none" stroke="#1f1f1f" stroke-width="2.8" stroke-linecap="round" stroke-linejoin="round"/></svg>
<div class="r" style="left:1569px;top:564px;width:825px;height:248.5px;border:1px solid #d6d6d6;border-top:none;border-radius:0 0 7px 7px;box-sizing:border-box;background:#fff;box-shadow:0 6px 14px rgba(0,0,0,0.10);overflow:hidden"><div style="position:absolute;left:0;top:167.5px;width:810px;height:71px;background:#efefef"></div><div style="position:absolute;left:810px;top:0;width:14px;height:248px;background:#f5f5f5"></div><div style="position:absolute;left:810.5px;top:47px;width:13px;height:199px;background:#c4c4c4;border-radius:7px"></div></div>
<div class="r" style="left:1570px;top:565px;width:810px;height:30px;overflow:hidden">
<div class="t" style="left:98.81px;top:-8.37px;font-size:16.5px;line-height:16.5px;color:#9c9c9c;font-weight:400;transform:scaleX(1.1851);transform-origin:0 0;">Bitte geben Sie an, welches Ihr höchstes Cambridg...</div>
</div>
<svg class="r" style="left:1616.5px;top:615.3px;width:27px;height:20.8px;overflow:visible;" viewBox="0 0 27 20.8"><g transform="scale(0.8084,0.8455)"><path d="M22.3 7.4 A11.1 8.3 0 0 1 30.4 21.6 C31 22.9 32.1 23.9 33.4 24.6 C30.8 24.8 28.4 24.1 26.8 23.4 C25.4 23.9 23.9 24.2 22.3 24.2 A11.1 8.3 0 0 1 22.3 7.4z" fill="#3b82f6"/><path d="M0.1 8.7 A11.8 8.7 0 1 1 7.6 16.8 C5.6 17.7 2.8 18.1 0 17.9 C1.3 17.1 2.4 16 3.1 14.6 C1.2 13 0.1 11 0.1 8.7z" fill="none" stroke="#fff" stroke-width="2.6"/><path d="M0.1 8.7 A11.8 8.7 0 1 1 7.6 16.8 C5.6 17.7 2.8 18.1 0 17.9 C1.3 17.1 2.4 16 3.1 14.6 C1.2 13 0.1 11 0.1 8.7z" fill="#adc8f8"/></g></svg>
<div class="t" style="left:1668.79px;top:601.72px;font-size:19px;line-height:19px;color:#262a2e;font-weight:400;transform:scaleX(1.2109);transform-origin:0 0;-webkit-text-stroke:0.1px #262a2e;">Französisch-Niveau</div>
<div class="t" style="left:1668.81px;top:627.73px;font-size:16.5px;line-height:16.5px;color:#9c9c9c;font-weight:400;transform:scaleX(1.1851);transform-origin:0 0;">Bitte geben Sie an, welches Ihr höchstes Cambridg...</div>
<svg class="r" style="left:1616.5px;top:687.5px;width:27px;height:20.8px;overflow:visible;" viewBox="0 0 27 20.8"><g transform="scale(0.8084,0.8455)"><path d="M22.3 7.4 A11.1 8.3 0 0 1 30.4 21.6 C31 22.9 32.1 23.9 33.4 24.6 C30.8 24.8 28.4 24.1 26.8 23.4 C25.4 23.9 23.9 24.2 22.3 24.2 A11.1 8.3 0 0 1 22.3 7.4z" fill="#3b82f6"/><path d="M0.1 8.7 A11.8 8.7 0 1 1 7.6 16.8 C5.6 17.7 2.8 18.1 0 17.9 C1.3 17.1 2.4 16 3.1 14.6 C1.2 13 0.1 11 0.1 8.7z" fill="none" stroke="#fff" stroke-width="2.6"/><path d="M0.1 8.7 A11.8 8.7 0 1 1 7.6 16.8 C5.6 17.7 2.8 18.1 0 17.9 C1.3 17.1 2.4 16 3.1 14.6 C1.2 13 0.1 11 0.1 8.7z" fill="#adc8f8"/></g></svg>
<div class="t" style="left:1668.80px;top:673.92px;font-size:19px;line-height:19px;color:#262a2e;font-weight:400;transform:scaleX(1.1967);transform-origin:0 0;-webkit-text-stroke:0.1px #262a2e;">Fragen zum Angebot</div>
<div class="t" style="left:1668.82px;top:700.33px;font-size:16.5px;line-height:16.5px;color:#9c9c9c;font-weight:400;transform:scaleX(1.1773);transform-origin:0 0;">Haben Sie offene Fragen zum Angebot?</div>
<svg class="r" style="left:1616.5px;top:758.6px;width:27px;height:20.8px;overflow:visible;" viewBox="0 0 27 20.8"><g transform="scale(0.8084,0.8455)"><path d="M22.3 7.4 A11.1 8.3 0 0 1 30.4 21.6 C31 22.9 32.1 23.9 33.4 24.6 C30.8 24.8 28.4 24.1 26.8 23.4 C25.4 23.9 23.9 24.2 22.3 24.2 A11.1 8.3 0 0 1 22.3 7.4z" fill="#3b82f6"/><path d="M0.1 8.7 A11.8 8.7 0 1 1 7.6 16.8 C5.6 17.7 2.8 18.1 0 17.9 C1.3 17.1 2.4 16 3.1 14.6 C1.2 13 0.1 11 0.1 8.7z" fill="none" stroke="#fff" stroke-width="2.6"/><path d="M0.1 8.7 A11.8 8.7 0 1 1 7.6 16.8 C5.6 17.7 2.8 18.1 0 17.9 C1.3 17.1 2.4 16 3.1 14.6 C1.2 13 0.1 11 0.1 8.7z" fill="#adc8f8"/></g></svg>
<div class="t" style="left:1668.74px;top:745.02px;font-size:19px;line-height:19px;color:#262a2e;font-weight:400;transform:scaleX(1.2575);transform-origin:0 0;-webkit-text-stroke:0.1px #262a2e;">Italienisch-Niveau</div>
<div class="t" style="left:1668.83px;top:770.73px;font-size:16.5px;line-height:16.5px;color:#9c9c9c;font-weight:400;transform:scaleX(1.1742);transform-origin:0 0;">Bitte geben Sie an, welches Ihr höchstes Italieni...</div>
<div class="r" style="left:1570px;top:563px;width:823px;height:2px;background:linear-gradient(rgba(0,0,0,0.03),rgba(0,0,0,0))"></div>
<div class="r" style="left:2243px;top:837.8px;width:151px;height:62px;background:#9fc0f9;border-radius:11px"></div>
<div class="t" style="left:2268.84px;top:856.78px;font-size:24px;line-height:24px;color:#ffffff;font-weight:400;transform:scaleX(1.0612);transform-origin:0 0;-webkit-text-stroke:0.15px #fff;">Erstellen</div>
<div class="r" style="left:2460px;top:170px;width:12px;height:1251px;background:#f5f5f5;"></div>
<div class="r" style="left:2460px;top:158px;width:12px;height:1108px;background:#c4c4c4;border-radius:6px"></div>
<div class="r" style="left:2472px;top:0px;width:1px;height:1475px;background:rgba(0,0,0,0.38);"></div>
<div class="r" style="left:0px;top:0px;width:1px;height:1475px;background:#8a8580;"></div>
<div class="r" style="left:0px;top:1474px;width:1454px;height:1px;background:#0c0c0c;"></div>
<div class="r" style="left:1454px;top:1474px;width:1019px;height:1px;background:#8a8a8a;"></div>
<svg class="r" style="left:0px;top:1462px;width:12px;height:13px;overflow:visible;" viewBox="0 0 12 13"><path d="M0 0 H1 A11 11.5 0 0 0 12 11.5 V13 H0z" fill="#0c0c0c"/></svg>
<svg class="r" style="left:2461px;top:1462px;width:12px;height:13px;overflow:visible;" viewBox="0 0 12 13"><path d="M12 0 H11 A11 11.5 0 0 1 0 11.5 V13 H12z" fill="#8a8a8a"/></svg>
</body></html>
